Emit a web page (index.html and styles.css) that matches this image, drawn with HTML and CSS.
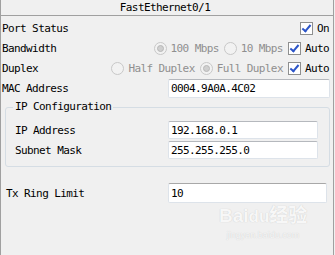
FILE: index.html
```html
<!DOCTYPE html>
<html lang="en">
<head>
    <meta charset="UTF-8">
    <meta name="viewport" content="width=device-width, initial-scale=1.0">
    <title>FastEthernet0/1</title>
    <link rel="stylesheet" href="styles.css">
</head>
<body>
    <div class="panel">
        <div class="title">FastEthernet0/1</div>

        <div class="row choice">
            <span class="label">Port Status</span>
            <div class="opts">
                <span class="check"></span><span class="opt-text">On</span>
            </div>
        </div>

        <div class="row choice">
            <span class="label">Bandwidth</span>
            <div class="opts">
                <span class="radio on"></span><span class="opt-text off">100 Mbps</span>
                <span class="radio"></span><span class="opt-text off">10 Mbps</span>
                <span class="check"></span><span class="opt-text">Auto</span>
            </div>
        </div>

        <div class="row choice">
            <span class="label">Duplex</span>
            <div class="opts">
                <span class="radio"></span><span class="opt-text off">Half Duplex</span>
                <span class="radio on"></span><span class="opt-text off">Full Duplex</span>
                <span class="check"></span><span class="opt-text">Auto</span>
            </div>
        </div>

        <div class="row">
            <span class="label">MAC Address</span>
            <input class="text mac" type="text" value="0004.9A0A.4C02" aria-label="MAC Address">
        </div>

        <fieldset class="group">
            <legend>IP Configuration</legend>
            <div class="row">
                <span class="label">IP Address</span>
                <input class="text ip" type="text" value="192.168.0.1" aria-label="IP Address">
            </div>
            <div class="row">
                <span class="label">Subnet Mask</span>
                <input class="text ip" type="text" value="255.255.255.0" aria-label="Subnet Mask">
            </div>
        </fieldset>

        <div class="row tx">
            <span class="label">Tx Ring Limit</span>
            <input class="text txin" type="text" value="10" aria-label="Tx Ring Limit">
        </div>

        <div class="watermark">
            <div class="wm-logo">Bai<span class="wm-du">du</span>经验</div>
            <div class="wm-url">jingyan.baidu.com</div>
        </div>
    </div>
</body>
</html>
```

FILE: styles.css
```css
body {
    margin: 0;
    font-family: "DejaVu Sans Mono", monospace;
    font-size: 11px;
    letter-spacing: -0.6px;
    color: #000;
    background: #f0f0f0;
}
.panel {
    position: relative;
    width: 332px;
    height: 255px;
    border-left: 1px solid #a0a0a0;
    border-right: 1px solid #a0a0a0;
    background: #f0f0f0;
    overflow: hidden;
}
.title {
    height: 15px;
    line-height: 15px;
    text-align: center;
    border-bottom: 1px solid #a0a0a0;
    margin-bottom: 2px;
    padding-right: 4px;
}
.row {
    display: flex;
    align-items: center;
    height: 20px;
    padding-left: 1px;
}
.label {
    width: 166px;
    flex-shrink: 0;
    white-space: nowrap;
}
.choice .label {
    width: auto;
}
.opts {
    flex-grow: 1;
    display: flex;
    align-items: center;
    justify-content: flex-end;
    padding-right: 4px;
}
.opt-text {
    margin-left: 4px;
    margin-right: 5px;
    white-space: nowrap;
}
.opt-text:last-child {
    margin-right: 0;
}
.opt-text.off {
    color: #8f8f8f;
}
.check {
    width: 11px;
    height: 11px;
    border: 1px solid #8e8f8f;
    background: #fff;
    position: relative;
}
.check::after {
    content: "";
    position: absolute;
    left: 3px;
    top: 0px;
    width: 3px;
    height: 7px;
    border-right: 2px solid #2c55c8;
    border-bottom: 2px solid #2c55c8;
    transform: rotate(40deg);
}
.radio {
    width: 11px;
    height: 11px;
    border: 1px solid #c8c8c8;
    border-radius: 50%;
    background: #f2f2f2;
    position: relative;
}
.radio.on::after {
    content: "";
    position: absolute;
    left: 2px;
    top: 2px;
    width: 5px;
    height: 5px;
    border-radius: 50%;
    border: 1px solid #b8b8b8;
    background: #cfcfcf;
}
.text {
    box-sizing: border-box;
    height: 19px;
    margin: 0;
    padding: 0 2px;
    border: 1px solid #dde3ea;
    border-top-color: #b5b8bd;
    border-radius: 2px;
    background: #fff;
    font-family: "DejaVu Sans Mono", monospace;
    font-size: 11px;
    letter-spacing: -0.6px;
    color: #000;
}
.mac {
    width: 162px;
}
.group {
    margin: 2px 3px 0 4px;
    padding: 6px 0 6px 9px;
    border: 1px solid #d5dde4;
    border-radius: 3px;
}
.group legend {
    padding: 0 2px;
    margin-left: -2px;
    line-height: 14px;
}
.group .row {
    padding-left: 0;
}
.group .label {
    width: 153px;
}
.ip {
    width: 150px;
    height: 18px;
}
.tx {
    margin-top: 16px;
    padding-left: 5px;
}
.tx .label {
    width: 162px;
}
.txin {
    width: 159px;
    height: 20px;
    border-top-color: #a8a8a8;
}
.watermark {
    position: absolute;
    left: 218px;
    top: 204px;
    width: 88px;
    font-family: "Liberation Sans", "Noto Sans CJK SC", sans-serif;
    letter-spacing: 0;
    text-align: center;
    color: #f7f7f7;
}
.wm-logo {
    font-size: 19px;
    font-weight: bold;
    line-height: 24px;
    white-space: nowrap;
    text-shadow: 0 0 1px #c4c4c4;
}
.wm-du {
    font-size: 17px;
}
.wm-url {
    font-size: 9px;
    line-height: 12px;
    text-shadow: 0 0 1px #c4c4c4;
}
```
